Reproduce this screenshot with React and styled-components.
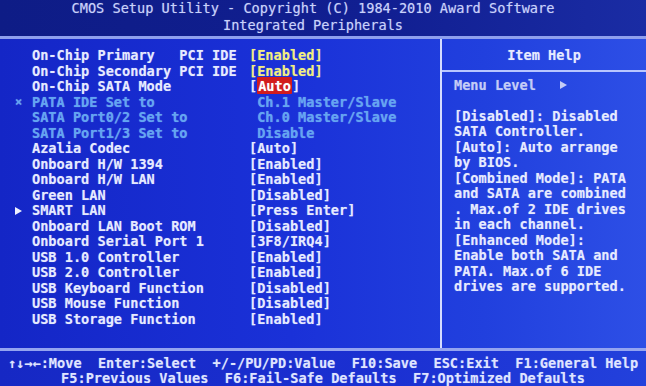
import React from "react";
import styled, { createGlobalStyle } from "styled-components";

const rows = [
  { label: "On-Chip Primary   PCI IDE", value: "[Enabled]", tone: "yellow" },
  { label: "On-Chip Secondary PCI IDE", value: "[Enabled]", tone: "yellow" },
  { label: "On-Chip SATA Mode", value: "Auto", selected: true },
  { label: "PATA IDE Set to", value: " Ch.1 Master/Slave", tone: "dim", marker: "x" },
  { label: "SATA Port0/2 Set to", value: " Ch.0 Master/Slave", tone: "dim" },
  { label: "SATA Port1/3 Set to", value: " Disable", tone: "dim" },
  { label: "Azalia Codec", value: "[Auto]" },
  { label: "Onboard H/W 1394", value: "[Enabled]" },
  { label: "Onboard H/W LAN", value: "[Enabled]" },
  { label: "Green LAN", value: "[Disabled]" },
  { label: "SMART LAN", value: "[Press Enter]", marker: "arrow" },
  { label: "Onboard LAN Boot ROM", value: "[Disabled]" },
  { label: "Onboard Serial Port 1", value: "[3F8/IRQ4]" },
  { label: "USB 1.0 Controller", value: "[Enabled]" },
  { label: "USB 2.0 Controller", value: "[Enabled]" },
  { label: "USB Keyboard Function", value: "[Disabled]" },
  { label: "USB Mouse Function", value: "[Disabled]" },
  { label: "USB Storage Function", value: "[Enabled]" },
];

const helpLines = [
  "[Disabled]: Disabled",
  "SATA Controller.",
  "[Auto]: Auto arrange",
  "by BIOS.",
  "[Combined Mode]: PATA",
  "and SATA are combined",
  ". Max.of 2 IDE drives",
  "in each channel.",
  "[Enhanced Mode]:",
  "Enable both SATA and",
  "PATA. Max.of 6 IDE",
  "drives are supported.",
];

const toneColors = {
  yellow: "#f2ef7c",
  dim: "#62a6f2",
  normal: "#e6eaff",
};

const GlobalStyle = createGlobalStyle`
  body {
    margin: 0;
    background: #1a2dd2;
    font-family: "DejaVu Sans Mono", "Liberation Mono", monospace;
  }
`;

const Screen = styled.div`
  width: 646px;
  height: 386px;
  display: flex;
  flex-direction: column;
  overflow: hidden;
  background: linear-gradient(90deg, #1426c6 0%, #1a31d8 45%, #2140de 75%, #2d4fe6 100%);
  color: #e6eaff;
  font-size: 13.6px;
  font-weight: bold;
  text-shadow: 0 0 1px rgba(220, 230, 255, 0.45);
`;

const Header = styled.header`
  height: 36px;
  display: flex;
  flex-direction: column;
  align-items: center;
  padding-right: 20px;
  background: linear-gradient(90deg, #0e1c86 0%, #111f92 60%, #1a2ca4 100%);
  border-bottom: 3px solid #8e9fee;
  color: #c9d1fb;
  font-weight: normal;
  line-height: 16.5px;
  white-space: pre;
`;

const Main = styled.main`
  flex: 1;
  display: flex;
  min-height: 0;
`;

const Settings = styled.section`
  width: 442px;
  padding-top: 9px;
  border-right: 2px solid #d4dcff;
  display: grid;
  grid-template-columns: 17px 217px 1fr;
  grid-auto-rows: 15.5px;
  align-content: start;
  padding-left: 15px;
  box-sizing: border-box;
`;

const Marker = styled.span`
  display: flex;
  align-items: center;
  color: ${(p) => (p.$dim ? toneColors.dim : "#eef1ff")};
  font-size: 12px;
  line-height: 15.5px;
`;

const Label = styled.span`
  white-space: pre;
  line-height: 15.5px;
  color: ${(p) => (p.$tone === "dim" ? toneColors.dim : toneColors.normal)};
`;

const Value = styled.span`
  white-space: pre;
  line-height: 15.5px;
  color: ${(p) => toneColors[p.$tone] || toneColors.normal};
`;

const Selected = styled.span`
  background: #d21c1c;
  color: #ffffff;
  padding: 1px 1px 0;
  border-radius: 1px;
`;

const Help = styled.aside`
  flex: 1;
  display: flex;
  flex-direction: column;
  padding-top: 9px;
  line-height: 15.5px;
`;

const HelpTitle = styled.div`
  text-align: center;
  height: 15.5px;
  padding-bottom: 6px;
  border-bottom: 2px solid #b8c6ff;
`;

const HelpBody = styled.div`
  padding: 6px 0 0 12px;
  white-space: pre;
`;

const MenuLevel = styled.div`
  display: flex;
  align-items: center;
  color: #c4ccf6;
  margin-bottom: 15.5px;
`;

const Footer = styled.footer`
  height: 38px;
  border-top: 3px solid #94a4f0;
  box-sizing: border-box;
  padding-top: 5px;
  display: flex;
  flex-direction: column;
  align-items: center;
  line-height: 15px;
  white-space: pre;
  color: #dfe4ff;
  background: linear-gradient(90deg, #1628c4 0%, #1b30d2 60%, #2341dc 100%);
`;

const Triangle = ({ color = "#eef1ff" }) => (
  <svg width="7" height="8" viewBox="0 0 7 8">
    <path d="M0 0 L7 4 L0 8 Z" fill={color} />
  </svg>
);

const SettingRow = ({ row }) => (
  <>
    <Marker $dim={row.marker === "x"}>
      {row.marker === "x" && "×"}
      {row.marker === "arrow" && <Triangle />}
    </Marker>
    <Label $tone={row.tone}>{row.label}</Label>
    <Value $tone={row.tone}>
      {row.selected ? (
        <>
          [<Selected>{row.value}</Selected>]
        </>
      ) : (
        row.value
      )}
    </Value>
  </>
);

const App = () => (
  <>
    <GlobalStyle />
    <Screen>
      <Header>
        <div>CMOS Setup Utility - Copyright (C) 1984-2010 Award Software</div>
        <div>Integrated Peripherals</div>
      </Header>
      <Main>
        <Settings>
          {rows.map((row) => (
            <SettingRow key={row.label} row={row} />
          ))}
        </Settings>
        <Help>
          <HelpTitle>Item Help</HelpTitle>
          <HelpBody>
            <MenuLevel>
              {"Menu Level   "}
              <Triangle color="#c4ccf6" />
            </MenuLevel>
            {helpLines.map((line) => (
              <div key={line}>{line}</div>
            ))}
          </HelpBody>
        </Help>
      </Main>
      <Footer>
        <div>↑↓→←:Move  Enter:Select  +/-/PU/PD:Value  F10:Save  ESC:Exit  F1:General Help</div>
        <div>F5:Previous Values  F6:Fail-Safe Defaults  F7:Optimized Defaults</div>
      </Footer>
    </Screen>
  </>
);

export default App;
